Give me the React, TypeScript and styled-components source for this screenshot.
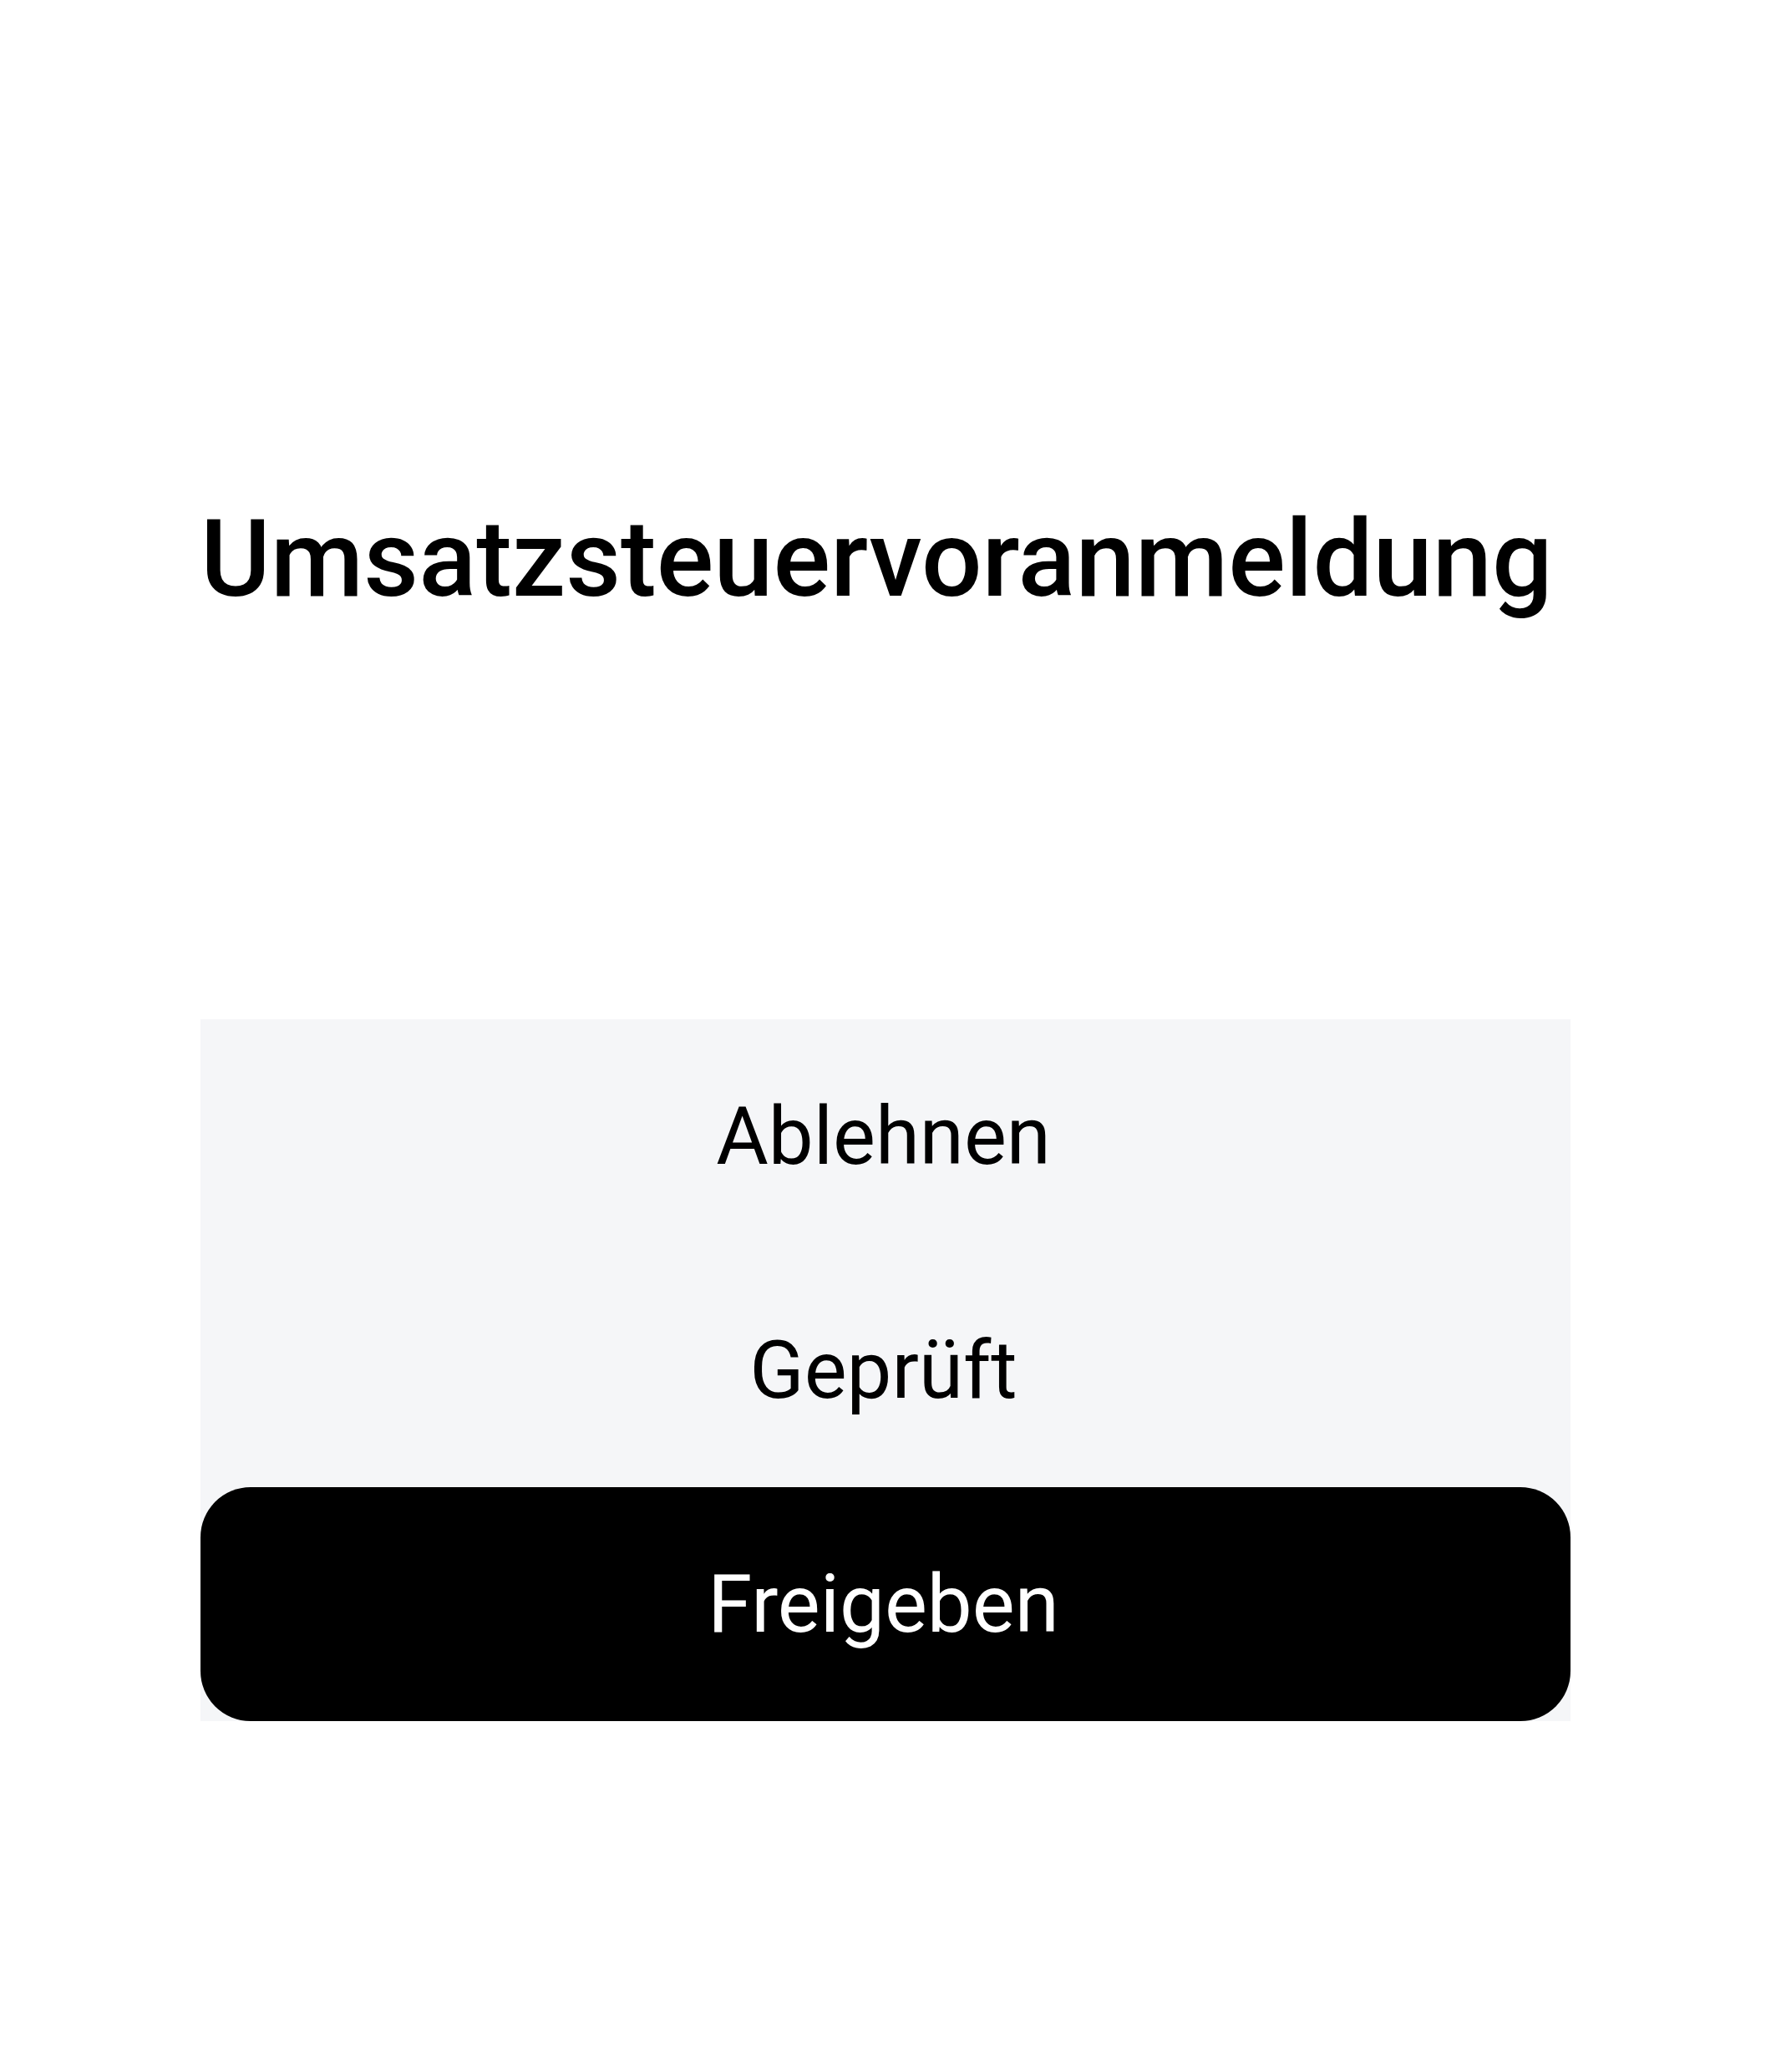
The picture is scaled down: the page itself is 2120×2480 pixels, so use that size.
import React from 'react';
import styled, { createGlobalStyle } from 'styled-components';

const GlobalStyle = createGlobalStyle`
  html, body {
    margin: 0;
    padding: 0;
    background: #ffffff;
  }
  body {
    font-family: Roboto, "Liberation Sans", sans-serif;
    color: #000000;
  }
`;

const Screen = styled.div`
  display: flex;
  flex-direction: column;
  align-items: stretch;
  width: 2120px;
  min-height: 2480px;
  padding: 605px 240px 0;
  box-sizing: border-box;
`;

const Title = styled.h1`
  margin: 0;
  font-size: 128px;
  line-height: 128px;
  font-weight: 500;
  letter-spacing: 0;
  text-align: left;
  white-space: nowrap;
`;

const ActionSheet = styled.div`
  display: flex;
  flex-direction: column;
  width: 100%;
  margin-top: 487px;
  background: #f5f6f8;
`;

const Action = styled.button<{ $primary?: boolean }>`
  display: flex;
  align-items: center;
  justify-content: center;
  height: 280px;
  width: 100%;
  padding: 0 5px 0 0;
  border: none;
  border-radius: ${p => (p.$primary ? '60px' : '0')};
  background: ${p => (p.$primary ? '#000000' : 'transparent')};
  color: ${p => (p.$primary ? '#ffffff' : '#000000')};
  font-family: Roboto, "Liberation Sans", sans-serif;
  font-size: 96px;
  line-height: 96px;
  font-weight: 400;
  cursor: pointer;
`;

export default function App() {
  return (
    <>
      <GlobalStyle />
      <Screen>
        <Title>Umsatzsteuervoranmeldung</Title>
        <ActionSheet>
          <Action>Ablehnen</Action>
          <Action>Geprüft</Action>
          <Action $primary>Freigeben</Action>
        </ActionSheet>
      </Screen>
    </>
  );
}
